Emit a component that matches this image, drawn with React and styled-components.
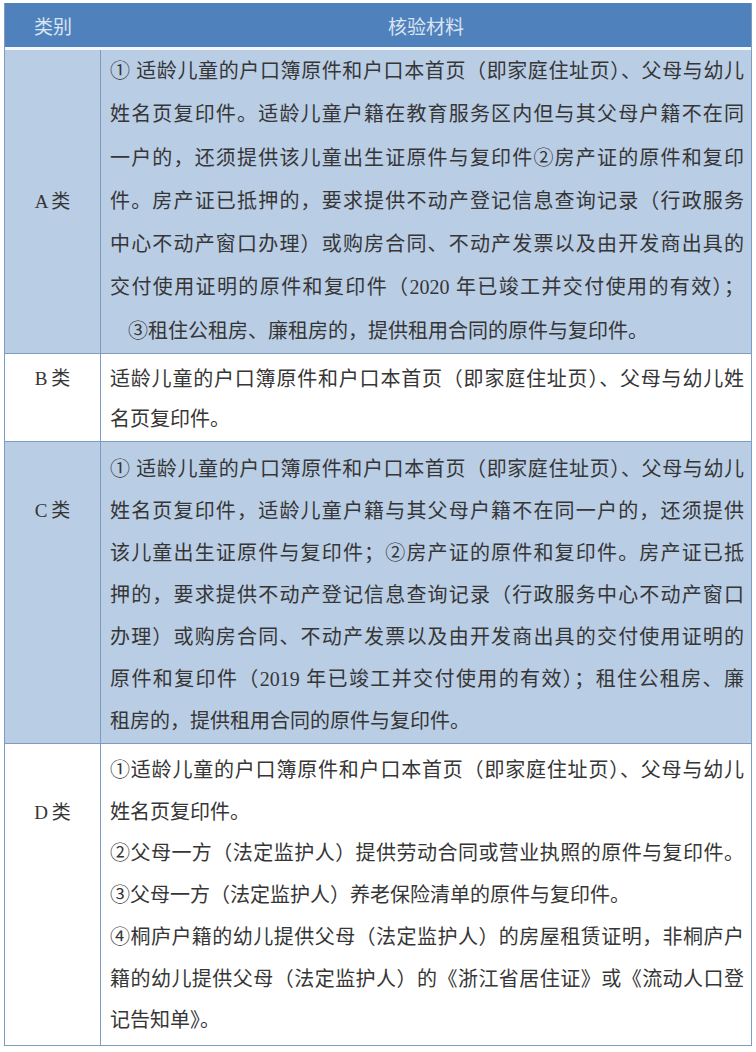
import React from 'react';
import styled, { createGlobalStyle } from 'styled-components';

const GlobalStyle = createGlobalStyle`
  html, body {
    margin: 0;
    padding: 0;
    background: #ffffff;
  }
  body {
    font-family: "Liberation Serif", "Noto Sans CJK SC", serif;
    color: #363636;
  }
`;

const Page = styled.div`
  padding: 3px 4px 4px 4px;
`;

const Table = styled.div`
  border: 1px solid #7e9bc2;
  border-top: none;
  display: flex;
  flex-direction: column;
`;

const HeaderRow = styled.div`
  display: grid;
  grid-template-columns: 96px 1fr;
  height: 44px;
  background: #4f81bd;
  border-bottom: 3px solid #f4f7fb;
  color: #dbe5f1;
  font-family: "Noto Sans CJK SC", sans-serif;
  font-size: 19px;
`;

const HeaderCell = styled.div`
  display: flex;
  align-items: center;
  justify-content: center;
`;

const Row = styled.div`
  display: grid;
  grid-template-columns: 96px 1fr;
  background: ${(p) => (p.$shaded ? '#b9cde5' : '#ffffff')};
  border-top: ${(p) => (p.$first ? 'none' : '1px solid #7e9bc2')};
  height: ${(p) => p.$height}px;
  box-sizing: border-box;
`;

// the label sits on one of the text lines of its row, not always the middle
const Label = styled.div`
  border-right: 1px solid #7e9bc2;
  padding-top: ${(p) => p.$top}px;
  text-align: center;
  font-size: 19px;
  line-height: ${(p) => p.$lh}px;
  word-spacing: -1px;
`;

const Content = styled.div`
  padding: ${(p) => p.$pad}px 7px 0 9px;
  font-size: 20px;
  line-height: ${(p) => p.$lh}px;
`;

const Line = styled.div`
  text-align: justify;
  text-align-last: ${(p) => (p.$full ? 'justify' : 'left')};
  padding-left: ${(p) => p.$indent || 0}px;
  white-space: nowrap;
`;

const rows = [
  {
    label: 'A 类',
    labelLine: 3,
    shaded: true,
    height: 303,
    lh: 43.3,
    pad: 0,
    lines: [
      ['① 适龄儿童的户口簿原件和户口本首页（即家庭住址页）、父母与幼儿', true],
      ['姓名页复印件。适龄儿童户籍在教育服务区内但与其父母户籍不在同', true],
      ['一户的，还须提供该儿童出生证原件与复印件②房产证的原件和复印', true],
      ['件。房产证已抵押的，要求提供不动产登记信息查询记录（行政服务', true],
      ['中心不动产窗口办理）或购房合同、不动产发票以及由开发商出具的', true],
      ['交付使用证明的原件和复印件（2020 年已竣工并交付使用的有效）；', true],
      ['③租住公租房、廉租房的，提供租用合同的原件与复印件。', false, 18],
    ],
  },
  {
    label: 'B 类',
    labelLine: 0,
    height: 88,
    lh: 40,
    pad: 5,
    lines: [
      ['适龄儿童的户口簿原件和户口本首页（即家庭住址页）、父母与幼儿姓', true],
      ['名页复印件。', false],
    ],
  },
  {
    label: 'C 类',
    labelLine: 1,
    shaded: true,
    height: 302,
    lh: 42,
    pad: 6,
    lines: [
      ['① 适龄儿童的户口簿原件和户口本首页（即家庭住址页）、父母与幼儿', true],
      ['姓名页复印件，适龄儿童户籍与其父母户籍不在同一户的，还须提供', true],
      ['该儿童出生证原件与复印件；②房产证的原件和复印件。房产证已抵', true],
      ['押的，要求提供不动产登记信息查询记录（行政服务中心不动产窗口', true],
      ['办理）或购房合同、不动产发票以及由开发商出具的交付使用证明的', true],
      ['原件和复印件（2019 年已竣工并交付使用的有效）；租住公租房、廉', true],
      ['租房的，提供租用合同的原件与复印件。', false],
    ],
  },
  {
    label: 'D 类',
    labelLine: 1,
    height: 302,
    lh: 41.7,
    pad: 6,
    lines: [
      ['①适龄儿童的户口簿原件和户口本首页（即家庭住址页）、父母与幼儿', true],
      ['姓名页复印件。', false],
      ['②父母一方（法定监护人）提供劳动合同或营业执照的原件与复印件。', true],
      ['③父母一方（法定监护人）养老保险清单的原件与复印件。', false],
      ['④桐庐户籍的幼儿提供父母（法定监护人）的房屋租赁证明，非桐庐户', true],
      ['籍的幼儿提供父母（法定监护人）的《浙江省居住证》或《流动人口登', true],
      ['记告知单》。', false],
    ],
  },
];

const App = () => (
  <Page>
    <GlobalStyle />
    <Table>
      <HeaderRow>
        <HeaderCell>类别</HeaderCell>
        <HeaderCell>核验材料</HeaderCell>
      </HeaderRow>
      {rows.map((row, i) => (
        <Row key={row.label} $shaded={row.shaded} $first={i === 0} $height={row.height}>
          <Label $lh={row.lh} $top={row.pad + row.labelLine * row.lh}>
            {row.label}
          </Label>
          <Content $lh={row.lh} $pad={row.pad}>
            {row.lines.map(([text, full, indent], j) => (
              <Line key={j} $full={full} $indent={indent}>
                {text}
              </Line>
            ))}
          </Content>
        </Row>
      ))}
    </Table>
  </Page>
);

export default App;
